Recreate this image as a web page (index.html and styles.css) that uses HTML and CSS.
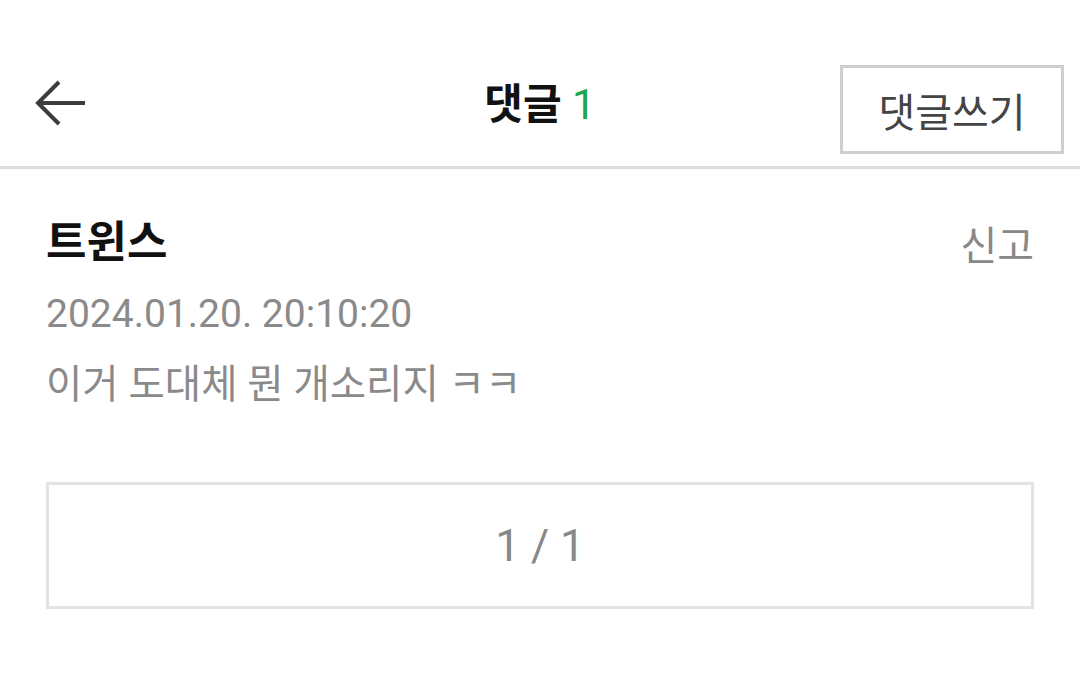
FILE: index.html
```html
<!DOCTYPE html>
<html lang="ko">
<head>
    <meta charset="UTF-8">
    <meta name="viewport" content="width=device-width, initial-scale=1.0">
    <title>댓글</title>
    <link rel="stylesheet" href="styles.css">
</head>
<body>
    <!-- 상단 바 -->
    <header class="topbar">
        <button class="back-btn" aria-label="뒤로">
            <svg width="54" height="48" viewBox="0 0 54 48">
                <path d="M51 24H5M25 3L4 24L25 45" fill="none" stroke="#3c3c3c" stroke-width="4"/>
            </svg>
        </button>
        <h1 class="title">댓글 <span class="count">1</span></h1>
        <button class="write-btn">댓글쓰기</button>
    </header>

    <!-- 댓글 목록 -->
    <main class="comments">
        <div class="comment">
            <div class="comment-head">
                <span class="author">트윈스</span>
                <a href="#" class="report">신고</a>
            </div>
            <div class="date">2024.01.20. 20:10:20</div>
            <p class="body">이거 도대체 뭔 개소리지 ㅋㅋ</p>
        </div>

        <div class="pager">1 / 1</div>
    </main>
</body>
</html>
```

FILE: styles.css
```css
* {
    margin: 0;
    padding: 0;
    box-sizing: border-box;
}

body {
    font-family: Roboto, "Noto Sans CJK KR", sans-serif;
    background: #fff;
    color: #111;
}

/* 상단 바 */
.topbar {
    height: 169px;
    display: grid;
    grid-template-columns: 1fr auto 1fr;
    align-items: start;
    padding: 65px 16px 0 16px;
    border-bottom: 3px solid #dcdcdc;
}
.back-btn {
    justify-self: start;
    background: none;
    border: none;
    display: flex;
    margin: 14px 0 0 18px;
}
.title {
    font-size: 42px;
    line-height: 50px;
    font-weight: 700;
    color: #111;
    margin-top: 15px;
}
.title .count {
    color: #1ea64b;
    font-weight: 400;
}
.write-btn {
    justify-self: end;
    width: 224px;
    height: 89px;
    background: #fff;
    border: 3px solid #cfcfcf;
    font-family: inherit;
    font-size: 40px;
    color: #444;
}

/* 댓글 */
.comments {
    padding: 0 46px;
}
.comment {
    padding-top: 49px;
}
.comment-head {
    display: flex;
    justify-content: space-between;
    align-items: flex-start;
}
.author {
    font-size: 44px;
    line-height: 50px;
    font-weight: 700;
    color: #111;
}
.report {
    font-size: 40px;
    line-height: 50px;
    color: #888;
    text-decoration: none;
    margin-top: 4px;
}
.date {
    font-size: 39px;
    line-height: 50px;
    color: #8a8a8a;
    margin-top: 17px;
}
.body {
    font-size: 39.5px;
    line-height: 50px;
    color: #8a8a8a;
    margin-top: 21px;
}

/* 페이지 표시 */
.pager {
    margin-top: 72px;
    height: 127px;
    border: 3px solid #e3e3e3;
    display: flex;
    align-items: center;
    justify-content: center;
    font-size: 44px;
    color: #888;
}
```
